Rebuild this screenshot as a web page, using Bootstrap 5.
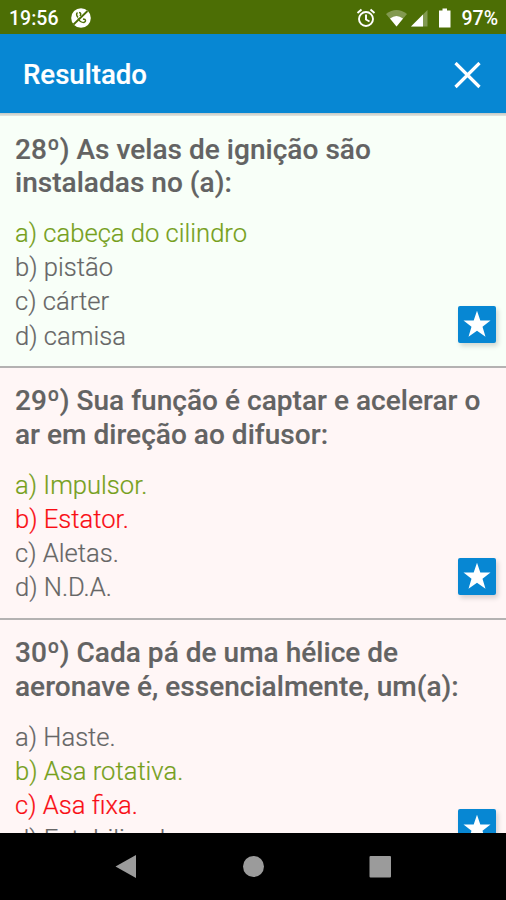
<!DOCTYPE html>
<html lang="pt-BR">
<head>
<meta charset="utf-8">
<meta name="viewport" content="width=device-width, initial-scale=1">
<title>Resultado</title>
<link href="https://cdn.jsdelivr.net/npm/bootstrap@5.3.0/dist/css/bootstrap.min.css" rel="stylesheet">
<style>
  body { font-family: Roboto, "Liberation Sans", sans-serif; color: #666; }
  .status-bar { height: 34px; background: #4c6e05; font-size: 19.5px; font-weight: 500; padding: 3px 8px 0 9px; }
  .dnd { margin-left: 13px; margin-bottom: 2px; }
  .battery { margin-left: 9px; }
  .app-bar { height: 79px; background: #0787d3; padding: 3px 25px 0 23px; }
  .app-title { font-size: 27.6px; font-weight: 500; line-height: 1; -webkit-text-stroke: .2px; }
  .app-edge { height: 3px; background: linear-gradient(#c4c8c4, #e3e6e0); }
  .question { height: 251.8px; padding: 16.5px 10px 0 15px; border-bottom: 2px solid #b4b2b2; }
  .question.right { background: #f8fff8; }
  .question.wrong { background: #fff6f6; }
  .prompt { font-size: 28px; font-weight: 500; line-height: 33.5px; letter-spacing: .03px; color: #636363; white-space: nowrap; -webkit-text-stroke: .15px; }
  .answers { font-size: 25.6px; font-weight: 300; line-height: 34.2px; margin-top: 16.5px; -webkit-text-stroke: .2px; }
  .correct { color: #76a01c; }
  .chosen { color: #f90d14; }
  .star-btn { width: 38px; height: 37px; background: #0787d3; border-radius: 2px; box-shadow: 2px 3px 5px rgba(0,0,0,.16); margin-bottom: 10px; }
  .nav-keys { height: 67px; background: #000; }
</style>
<script src="https://cdn.jsdelivr.net/npm/bootstrap@5.3.0/dist/js/bootstrap.bundle.min.js"></script>
</head>
<body class="vh-100 d-flex flex-column overflow-hidden">
<header class="flex-shrink-0">
  <div class="status-bar d-flex align-items-center text-white">
    <span class="clock">19:56</span>
    <svg class="dnd" width="20" height="20" viewBox="0 0 20 20"><circle cx="10" cy="10" r="9.8" fill="#fff"/><path d="M6.500 4.500Q4.500 6.500 7 9.500M8 4.500Q11 5 9 8M7 10.500Q9 14.500 13 14.500Q15.500 13 14 11.500L12 11" fill="none" stroke="#4c6e05" stroke-width="1.400"/><path d="M2.500 16.500 16.500 3" stroke="#4c6e05" stroke-width="1.800"/></svg>
    <svg class="ms-auto" width="96" height="24" viewBox="0 0 96 24">
      <g fill="none" stroke="#fff" stroke-width="1.900"><circle cx="10" cy="12" r="7"/><path d="M10 7.500v5l3.500 2M1.500 6l4-3.500M18.500 6l-4-3.500"/></g>
      <path d="M30 7Q40.500-1 51 7L40.500 19.500Z" fill="#fff" opacity=".3"/><path d="M34 11.500Q40.500 6.500 47 11.500L40.500 19.500Z" fill="#fff"/>
      <path d="M71.500 3v16.500H55Z" fill="#fff" opacity=".3"/><path d="M67 7.500V19.500H55Z" fill="#fff"/>
      <path d="M83 3.500H86.500V1.500h4.500v2h3.500v17h-11.500Z" fill="#fff"/>
    </svg>
    <span class="battery">97%</span>
  </div>
  <div class="app-bar d-flex align-items-center justify-content-between text-white">
    <h1 class="app-title m-0">Resultado</h1>
    <svg width="27" height="27" viewBox="0 0 27 27"><path d="m1.500 1 24 24m0-24-24 24" stroke="#fff" stroke-width="3.200"/></svg>
  </div>
  <div class="app-edge"></div>
</header>
<main class="flex-grow-1 overflow-hidden">
  <section class="question right">
    <h2 class="prompt m-0">28º) As velas de ignição são<br>instaladas no (a):</h2>
    <div class="d-flex justify-content-between align-items-end">
      <div class="answers"><div class="correct">a) cabeça do cilindro</div><div>b) pistão</div><div>c) cárter</div><div>d) camisa</div></div>
      <div class="star-btn d-flex align-items-center justify-content-center"><svg width="28" height="28" viewBox="0 0 28 28"><path d="m14 .8 3.300 9.600H27.500L19.500 16.700 22.500 26.700 14 20.700 5.500 26.700 8.500 16.700.5 10.400H10.700Z" fill="#fff"/></svg></div>
    </div>
  </section>
  <section class="question wrong">
    <h2 class="prompt m-0">29º) Sua função é captar e acelerar o<br>ar em direção ao difusor:</h2>
    <div class="d-flex justify-content-between align-items-end">
      <div class="answers"><div class="correct">a) Impulsor.</div><div class="chosen">b) Estator.</div><div>c) Aletas.</div><div>d) N.D.A.</div></div>
      <div class="star-btn d-flex align-items-center justify-content-center"><svg width="28" height="28" viewBox="0 0 28 28"><path d="m14 .8 3.300 9.600H27.500L19.500 16.700 22.500 26.700 14 20.700 5.500 26.700 8.500 16.700.5 10.400H10.700Z" fill="#fff"/></svg></div>
    </div>
  </section>
  <section class="question wrong">
    <h2 class="prompt m-0">30º) Cada pá de uma hélice de<br>aeronave é, essencialmente, um(a):</h2>
    <div class="d-flex justify-content-between align-items-end">
      <div class="answers"><div>a) Haste.</div><div class="correct">b) Asa rotativa.</div><div class="chosen">c) Asa fixa.</div><div>d) Estabilizador.</div></div>
      <div class="star-btn d-flex align-items-center justify-content-center"><svg width="28" height="28" viewBox="0 0 28 28"><path d="m14 .8 3.300 9.600H27.500L19.500 16.700 22.500 26.700 14 20.700 5.500 26.700 8.500 16.700.5 10.400H10.700Z" fill="#fff"/></svg></div>
    </div>
  </section>
</main>
<footer class="nav-keys flex-shrink-0">
  <svg class="d-block" width="506" height="67" viewBox="0 0 506 67" fill="#9b9b9b"><path d="M136 22v23l-20.500-11.500Z"/><circle cx="253.500" cy="33.500" r="10.500"/><rect x="369.500" y="23" width="21.500" height="21.500" rx="1"/></svg>
</footer>
</body>
</html>
